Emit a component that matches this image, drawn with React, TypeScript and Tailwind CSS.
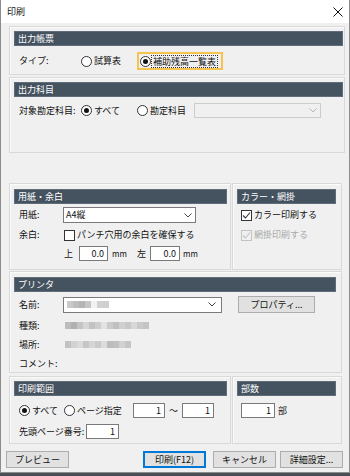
import type { ReactNode } from 'react'

const font = "font-['Meiryo_UI','Noto_Sans_CJK_JP',sans-serif]"

function Header({ children }: { children: ReactNode }) {
  return (
    <div className="h-[15px] bg-[#45525f] border border-[#5f6c79] text-white text-[9px] leading-[13px] pl-[3px]">
      {children}
    </div>
  )
}

function Group({ className, children }: { className: string; children: ReactNode }) {
  return (
    <div className={`border border-[#d9d9d9] shadow-[inset_1px_1px_0_#fbfbfb] bg-[#f0f0f0] ${className}`}>
      {children}
    </div>
  )
}

function Radio({ on = false }: { on?: boolean }) {
  return (
    <span className="w-[11px] h-[11px] shrink-0 rounded-full border border-[#333] bg-white flex items-center justify-center">
      {on && <span className="w-[5px] h-[5px] rounded-full bg-[#111]" />}
    </span>
  )
}

function Check({ disabled = false }: { disabled?: boolean }) {
  const c = disabled ? '#c3c3c3' : '#333'
  return (
    <span
      className={`w-[11px] h-[11px] shrink-0 border flex items-center justify-center ${
        disabled ? 'border-[#c3c3c3] bg-[#f0f0f0]' : 'border-[#333] bg-white'
      }`}
    >
      <svg width="9" height="9" viewBox="0 0 9 9">
        <polyline points="1,4.5 3.5,7 8,1.5" fill="none" stroke={c} strokeWidth="1.1" />
      </svg>
    </span>
  )
}

function Chevron({ color = '#444' }: { color?: string }) {
  return (
    <svg width="8" height="5" viewBox="0 0 8 5">
      <polyline points="0.5,0.5 4,4 7.5,0.5" fill="none" stroke={color} strokeWidth="1" />
    </svg>
  )
}

function NumBox({ w, value }: { w: string; value: string }) {
  return (
    <span className={`${w} h-[15px] shrink-0 bg-white border border-[#7a7a7a] flex items-center justify-end pr-[3px] text-[9px] leading-none`}>
      {value}
    </span>
  )
}

// pixelated blur standing in for hidden printer details
function Mosaic({ shades }: { shades: string[] }) {
  return (
    <span className="flex h-[7px] blur-[0.5px]">
      {shades.map((s, i) => (
        <span key={i} className="w-[6px] h-full" style={{ background: s }} />
      ))}
    </span>
  )
}

function Btn({ children, focus = false }: { children: ReactNode; focus?: boolean }) {
  return (
    <div
      className={`w-[63px] h-[17px] flex items-center justify-center text-[9px] leading-none bg-[#e1e1e1] border ${
        focus ? 'border-[#0078d7] shadow-[inset_0_0_0_1px_#0078d7]' : 'border-[#adadad]'
      }`}
    >
      {children}
    </div>
  )
}

export default function App() {
  return (
    <div className={`w-[350px] h-[476px] bg-[#4a4f57] ${font} text-[#111]`}>
      <div className="h-[473px] bg-[#f0f0f0] border-x border-b border-[#8c8c8c] flex flex-col">
        {/* Title bar */}
        <div className="h-[23px] bg-white flex items-center justify-between pl-[6px] pr-[6px]">
          <span className="text-[9px] leading-none">印刷</span>
          <svg width="10" height="10" viewBox="0 0 10 10">
            <path d="M0.5 0.5 L9.5 9.5 M9.5 0.5 L0.5 9.5" stroke="#111" strokeWidth="1" />
          </svg>
        </div>

        {/* 出力帳票 */}
        <Group className="mt-[3px] ml-[8px] w-[336px] h-[49px] pt-[4px] pl-[4px] pr-[1px]">
          <Header>出力帳票</Header>
          <div className="mt-[6px] ml-[5px] h-[18px] flex items-center text-[9px]">
            <span className="w-[62px]">タイプ:</span>
            <span className="w-[56px] flex items-center gap-[2px]">
              <Radio />
              試算表
            </span>
            <span className="w-[86px] h-[18px] border-2 border-[#f6c44e] flex items-center pl-[1px] gap-[1px]">
              <Radio on />
              <span className="outline-1 outline-dotted outline-[#333] px-[1px] leading-[11px]">補助残高一覧表</span>
            </span>
          </div>
        </Group>

        {/* 出力科目 */}
        <Group className="mt-[2px] ml-[8px] w-[336px] h-[76px] pt-[4px] pl-[4px] pr-[1px]">
          <Header>出力科目</Header>
          <div className="mt-[5px] ml-[5px] h-[17px] flex items-center text-[9px]">
            <span className="w-[62px]">対象勘定科目:</span>
            <span className="w-[56px] flex items-center gap-[2px]">
              <Radio on />
              すべて
            </span>
            <span className="w-[57px] flex items-center gap-[2px]">
              <Radio />
              勘定科目
            </span>
            <span className="w-[127px] h-[15px] border border-[#cccccc] bg-[#f0f0f0] flex items-center justify-end pr-[3px]">
              <Chevron color="#b5b5b5" />
            </span>
          </div>
        </Group>

        {/* 用紙・余白 / カラー・網掛 */}
        <div className="mt-[30px] ml-[8px] flex gap-[1px]">
          <Group className="w-[222px] h-[87px] pt-[5px] pl-[4px] pr-[3px]">
            <Header>用紙・余白</Header>
            <div className="mt-[3px] ml-[5px] flex items-center text-[9px]">
              <span className="w-[44px]">用紙:</span>
              <span className="w-[133px] h-[16px] bg-white border border-[#7a7a7a] flex items-center justify-between pl-[2px] pr-[3px]">
                A4縦
                <Chevron />
              </span>
            </div>
            <div className="mt-[5px] ml-[5px] h-[14px] flex items-center text-[9px]">
              <span className="w-[45px]">余白:</span>
              <span className="w-[11px] h-[11px] border border-[#333] bg-white" />
              <span className="ml-[2px]">パンチ穴用の余白を確保する</span>
            </div>
            <div className="mt-[4px] ml-[50px] flex items-center text-[9px]">
              <span className="w-[15px]">上</span>
              <NumBox w="w-[29px]" value="0.0" />
              <span className="w-[29px] pl-[4px] text-[8px]">mm</span>
              <span className="w-[13px]">左</span>
              <NumBox w="w-[30px]" value="0.0" />
              <span className="pl-[3px] text-[8px]">mm</span>
            </div>
          </Group>
          <Group className="w-[110px] h-[87px] pt-[5px] pl-[4px] pr-[5px]">
            <Header>カラー・網掛</Header>
            <div className="mt-[4px] ml-[4px] h-[14px] flex items-center gap-[2px] text-[9px]">
              <Check />
              カラー印刷する
            </div>
            <div className="mt-[6px] ml-[4px] h-[14px] flex items-center gap-[2px] text-[9px] text-[#a8a8a8]">
              <Check disabled />
              網掛印刷する
            </div>
          </Group>
        </div>

        {/* プリンタ */}
        <Group className="mt-[1px] ml-[8px] w-[333px] h-[102px] pt-[5px] pl-[4px] pr-[5px]">
          <Header>プリンタ</Header>
          <div className="mt-[4px] ml-[5px] flex items-center text-[9px]">
            <span className="w-[44px]">名前:</span>
            <span className="w-[159px] h-[16px] bg-white border border-[#7a7a7a] flex items-center justify-between pl-[3px] pr-[5px]">
              <Mosaic shades={['#c9c9c9', '#bdbdbd', '#b5b5b5', '#c6c6c6', '#f2f2f2', '#d2d2d2', '#cfcfcf']} />
              <Chevron />
            </span>
            <span className="ml-[16px] w-[77px] h-[17px] bg-[#e1e1e1] border border-[#adadad] flex items-center justify-center leading-none">
              プロパティ...
            </span>
          </div>
          <div className="mt-[3px] ml-[5px] h-[19px] flex items-center text-[9px]">
            <span className="w-[46px]">種類:</span>
            <Mosaic
              shades={['#bcbcbc', '#b0b0b0', '#c4c4c4', '#d6d6d6', '#c2c2c2', '#cdcdcd', '#e2e2e2', '#cbcbcb', '#c0c0c0', '#d0d0d0', '#c8c8c8', '#d8d8d8', '#cacaca', '#c4c4c4']}
            />
          </div>
          <div className="ml-[5px] h-[19px] flex items-center text-[9px]">
            <span className="w-[46px]">場所:</span>
            <Mosaic
              shades={['#c2c2c2', '#d2d2d2', '#dadada', '#c6c6c6', '#d5d5d5', '#cbcbcb', '#dcdcdc', '#bcbcbc', '#c0c0c0', '#d1d1d1', '#c5c5c5']}
            />
          </div>
          <div className="ml-[5px] h-[19px] flex items-center text-[9px]">
            <span>コメント:</span>
          </div>
        </Group>

        {/* 印刷範囲 / 部数 */}
        <div className="mt-[3px] ml-[8px] flex gap-[1px]">
          <Group className="w-[222px] h-[68px] pt-[4px] pl-[4px] pr-[3px]">
            <Header>印刷範囲</Header>
            <div className="mt-[7px] ml-[5px] flex items-center text-[9px]">
              <span className="w-[45px] flex items-center gap-[2px]">
                <Radio on />
                すべて
              </span>
              <span className="w-[69px] flex items-center gap-[2px]">
                <Radio />
                ページ指定
              </span>
              <NumBox w="w-[32px]" value="1" />
              <span className="w-[17px] text-center">～</span>
              <NumBox w="w-[32px]" value="1" />
            </div>
            <div className="mt-[6px] ml-[5px] flex items-center text-[9px]">
              <span className="w-[67px]">先頭ページ番号:</span>
              <NumBox w="w-[33px]" value="1" />
            </div>
          </Group>
          <Group className="w-[110px] h-[68px] pt-[4px] pl-[4px] pr-[5px]">
            <Header>部数</Header>
            <div className="mt-[7px] ml-[4px] flex items-center gap-[3px] text-[9px]">
              <NumBox w="w-[34px]" value="1" />
              部
            </div>
          </Group>
        </div>

        {/* Buttons */}
        <div className="mt-[7px] pl-[5px] pr-[6px] flex items-center">
          <Btn>プレビュー</Btn>
          <div className="flex-1" />
          <Btn focus>印刷(F12)</Btn>
          <div className="w-[7px]" />
          <Btn>キャンセル</Btn>
          <div className="w-[4px]" />
          <Btn>詳細設定...</Btn>
        </div>
      </div>
    </div>
  )
}
